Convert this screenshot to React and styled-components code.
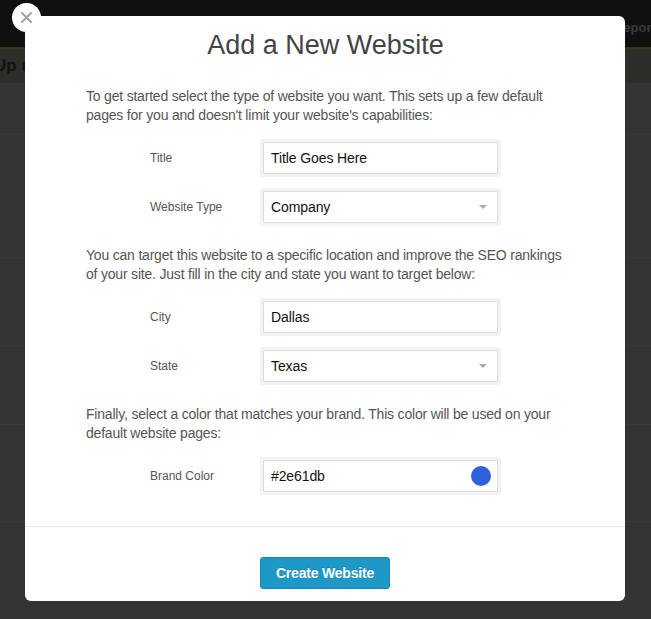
import React from 'react';
import styled, { createGlobalStyle } from 'styled-components';

const Global = createGlobalStyle`
  html, body { margin: 0; padding: 0; background: #333333; }
  body { font-family: "Liberation Sans", Arial, Helvetica, sans-serif; overflow: hidden; }
`;

const Page = styled.div`
  width: 651px;
  height: 619px;
  overflow: hidden;
  background: #333333;
`;

const TopBar = styled.div`
  height: 47px;
  background: #101010;
  display: flex;
  align-items: center;
  justify-content: flex-end;
  overflow: hidden;
`;

const NavItem = styled.span`
  color: #3b3b3b;
  font-weight: bold;
  font-size: 13px;
  margin-right: -12px;
  margin-top: 8px;
`;

const GreenLine = styled.div`
  height: 2px;
  background: #2b3a17;
`;

const SubBar = styled.div`
  height: 34px;
  background: #2e2d29;
  display: flex;
  align-items: center;
  overflow: hidden;
`;

const SubTitle = styled.span`
  color: #121212;
  font-weight: bold;
  font-size: 17px;
  margin-left: -6px;
`;

const BgRow = styled.div`
  height: ${p => p.h}px;
  border-bottom: 1px solid #383838;
`;

const Overlay = styled.div`
  position: fixed;
  inset: 0;
`;

const Modal = styled.div`
  position: absolute;
  left: 25px;
  top: 16px;
  width: 600px;
  height: 585px;
  background: #fff;
  border-radius: 6px;
  display: flex;
  flex-direction: column;
`;

const Close = styled.button`
  position: absolute;
  left: -13px;
  top: -13px;
  width: 29px;
  height: 29px;
  border-radius: 50%;
  border: none;
  background: #fff;
  padding: 0;
  display: flex;
  align-items: center;
  justify-content: center;
`;

const Body = styled.div`
  padding: 13px 60px 0 61px;
  flex: 1;
`;

const Title = styled.h1`
  margin: 0 0 26px;
  text-align: center;
  font-weight: normal;
  font-size: 27px;
  line-height: 32px;
  color: #444;
`;

const Section = styled.div`
  & + & { margin-top: 23px; }
`;

const Intro = styled.p`
  margin: 0 0 17px;
  font-size: 14px;
  line-height: 19px;
  letter-spacing: -0.2px;
  color: #555;
`;

const Rows = styled.div`
  display: grid;
  grid-template-columns: 113px 235px;
  row-gap: 17px;
  margin-left: 64px;
  align-items: center;
`;

const Label = styled.label`
  font-size: 12px;
  color: #555;
`;

const Field = styled.div`
  position: relative;
  height: 32px;
  box-sizing: border-box;
  border: 1px solid #dcdcdc;
  box-shadow: 0 0 0 3px #f3f3f3;
  border-radius: 1px;
  display: flex;
  align-items: center;
  padding: 0 8px 0 7px;
  font-size: 14px;
  letter-spacing: -0.1px;
  color: #111;
`;

const Value = styled.span`
  flex: 1;
`;

const Caret = styled.span`
  width: 0;
  height: 0;
  border-left: 4px solid transparent;
  border-right: 4px solid transparent;
  border-top: 4px solid #aaa;
  margin-right: 2px;
`;

const Swatch = styled.span`
  width: 20px;
  height: 20px;
  border-radius: 50%;
  background: ${p => p.color};
  margin-right: -2px;
`;

const Footer = styled.div`
  border-top: 1px solid #e8e8e8;
  padding: 30px 0 12px;
  display: flex;
  justify-content: center;
`;

const Button = styled.button`
  width: 130px;
  height: 32px;
  background: #1e98c6;
  border: 1px solid #1a88b3;
  border-radius: 3px;
  color: #fff;
  font-family: "Liberation Sans", Arial, sans-serif;
  font-weight: bold;
  font-size: 14px;
  letter-spacing: -0.2px;
  text-shadow: 0 -1px 0 rgba(0,0,0,0.15);
`;

const sections = [
  {
    text: "To get started select the type of website you want. This sets up a few default pages for you and doesn't limit your website's capabilities:",
    rows: [
      { label: 'Title', value: 'Title Goes Here' },
      { label: 'Website Type', value: 'Company', select: true },
    ],
  },
  {
    text: 'You can target this website to a specific location and improve the SEO rankings of your site. Just fill in the city and state you want to target below:',
    rows: [
      { label: 'City', value: 'Dallas' },
      { label: 'State', value: 'Texas', select: true },
    ],
  },
  {
    text: 'Finally, select a color that matches your brand. This color will be used on your default website pages:',
    rows: [{ label: 'Brand Color', value: '#2e61db', color: '#2e61db' }],
  },
];

export default function App() {
  return (
    <>
      <Global />
      <Page>
        <TopBar><NavItem>Reports</NavItem></TopBar>
        <GreenLine />
        <SubBar><SubTitle>Up next</SubTitle></SubBar>
        <BgRow h={51} />
        <BgRow h={122} />
        <BgRow h={87} />
        <BgRow h={78} />
        <BgRow h={96} />
      </Page>
      <Overlay>
        <Modal>
          <Close aria-label="Close">
            <svg width="11" height="11" viewBox="0 0 11 11">
              <path d="M1 1L10 10M10 1L1 10" stroke="#a3a3a3" strokeWidth="2" strokeLinecap="round" />
            </svg>
          </Close>
          <Body>
            <Title>Add a New Website</Title>
            {sections.map((s, i) => (
              <Section key={i}>
                <Intro>{s.text}</Intro>
                <Rows>
                  {s.rows.map(r => (
                    <React.Fragment key={r.label}>
                      <Label>{r.label}</Label>
                      <Field>
                        <Value>{r.value}</Value>
                        {r.select && <Caret />}
                        {r.color && <Swatch color={r.color} />}
                      </Field>
                    </React.Fragment>
                  ))}
                </Rows>
              </Section>
            ))}
          </Body>
          <Footer>
            <Button>Create Website</Button>
          </Footer>
        </Modal>
      </Overlay>
    </>
  );
}
